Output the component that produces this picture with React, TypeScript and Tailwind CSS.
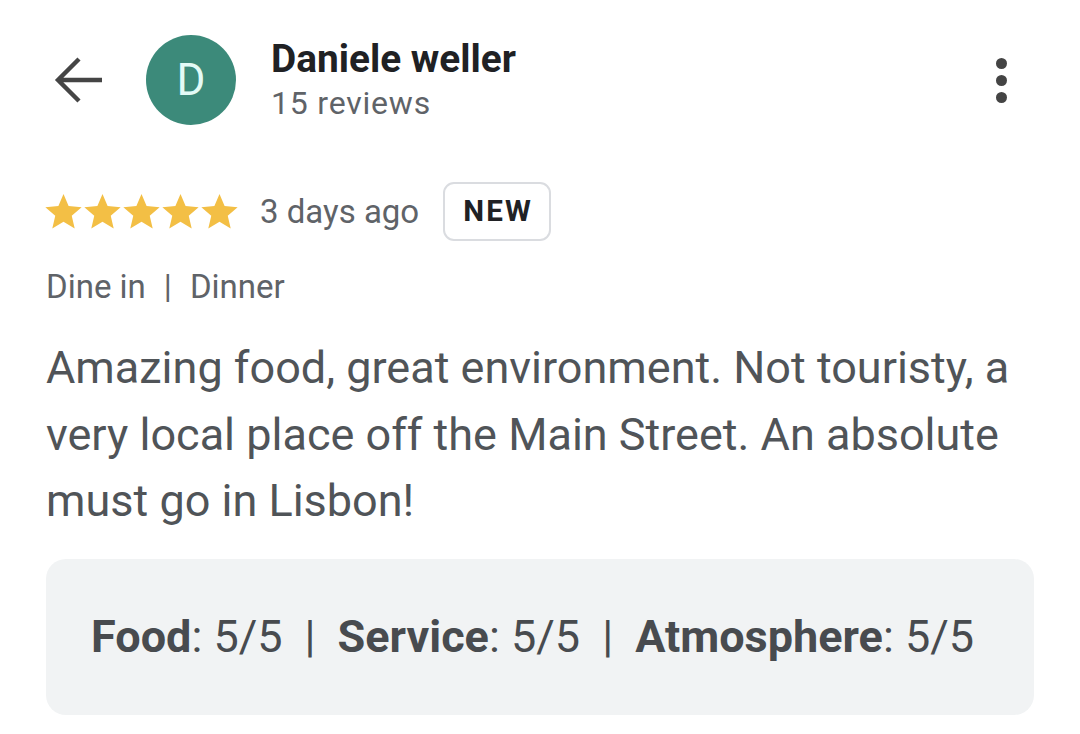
import React from "react";

const Star = () => (
  <svg width="37" height="35" viewBox="2 2 20 19.3">
    <path fill="#F3BF45" d="M12 17.27L18.18 21l-1.64-7.03L22 9.24l-7.19-.61L12 2 9.19 8.63 2 9.24l5.46 4.73L5.82 21z" />
  </svg>
);

export default function App() {
  return (
    <div className="w-[1080px] h-[734px] bg-white font-['Roboto',sans-serif] text-[#5f6368] overflow-hidden">
      <div className="flex items-start pt-[35px] pl-[54px] pr-[73px]">
        <svg width="50" height="50" viewBox="0 0 50 50" className="shrink-0 mt-[20px]">
          <path d="M4 25 H48 M25 4 L4 25 L25 46" fill="none" stroke="#454545" strokeWidth="4.4" strokeLinecap="butt" strokeLinejoin="miter" />
        </svg>
        <div className="ml-[42px] w-[90px] h-[90px] rounded-full bg-[#3c8a7a] flex items-center justify-center text-[#e3faf6] text-[44px] leading-none">
          D
        </div>
        <div className="ml-[35px] flex flex-col pt-[1px]">
          <div className="text-[38.8px] font-bold text-[#202124] leading-[46px]">Daniele weller</div>
          <div className="text-[32px] leading-[40px] text-[#5f6368] mt-[1px] tracking-[0.8px]">15 reviews</div>
        </div>
        <div className="ml-auto flex flex-col items-center gap-[6px] pt-[23px]">
          <div className="w-[11px] h-[11px] rounded-full bg-[#444]" />
          <div className="w-[11px] h-[11px] rounded-full bg-[#444]" />
          <div className="w-[11px] h-[11px] rounded-full bg-[#444]" />
        </div>
      </div>

      <div className="flex items-center pl-[45px] mt-[57px]">
        <div className="flex gap-[2px]">
          <Star />
          <Star />
          <Star />
          <Star />
          <Star />
        </div>
        <span className="ml-[22px] text-[33px] leading-none text-[#5f6368]">3 days ago</span>
        <span className="ml-[24px] h-[59px] w-[108px] flex items-center justify-center border-[2px] border-[#dadce0] rounded-[11px] text-[29.5px] font-bold text-[#202124] tracking-[2.2px] pl-[2px]">
          NEW
        </span>
      </div>

      <div className="pl-[46px] mt-[26px] text-[33px] leading-[40px] text-[#5f6368]">
        Dine in<span className="mx-[18px]">|</span>Dinner
      </div>

      <div className="pl-[46px] pr-[40px] mt-[28px] text-[45px] leading-[66.5px] text-[#505458]">
        Amazing food, great environment. Not touristy, a very local place off the Main Street. An absolute must go in Lisbon!
      </div>

      <div className="mx-[46px] mt-[24px] h-[156px] rounded-[20px] bg-[#f1f3f4] flex items-center pl-[45px] text-[45px] text-[#484b4f]">
        <span>
          <span className="font-bold">Food</span>: 5/5
        </span>
        <span className="mx-[22px]">|</span>
        <span>
          <span className="font-bold">Service</span>: 5/5
        </span>
        <span className="mx-[22px]">|</span>
        <span>
          <span className="font-bold">Atmosphere</span>: 5/5
        </span>
      </div>
    </div>
  );
}
